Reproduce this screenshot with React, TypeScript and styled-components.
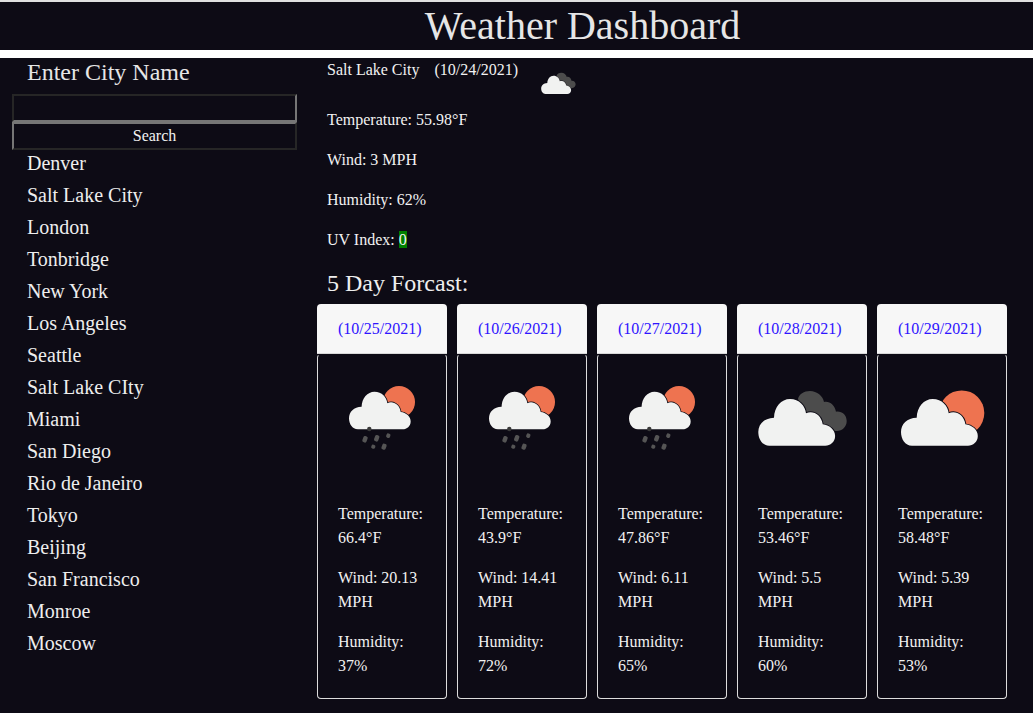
import styled, { createGlobalStyle } from "styled-components";

const GlobalStyle = createGlobalStyle`
  html, body {
    margin: 0;
    padding: 0;
    background-color: #0d0b15;
  }

  body {
    color: #f2f2f2;
    font-family: "Liberation Serif", "Times New Roman", serif;
    font-size: 16px;
    line-height: 24px;
  }
`;

const CITIES = [
  "Denver",
  "Salt Lake City",
  "London",
  "Tonbridge",
  "New York",
  "Los Angeles",
  "Seattle",
  "Salt Lake CIty",
  "Miami",
  "San Diego",
  "Rio de Janeiro",
  "Tokyo",
  "Beijing",
  "San Francisco",
  "Monroe",
  "Moscow",
];

type IconKind = "rain" | "clouds" | "sun";

const FORECAST: {
  date: string;
  temp: string;
  wind: string;
  humidity: string;
  icon: IconKind;
}[] = [
  { date: "(10/25/2021)", temp: "66.4", wind: "20.13", humidity: "37", icon: "rain" },
  { date: "(10/26/2021)", temp: "43.9", wind: "14.41", humidity: "72", icon: "rain" },
  { date: "(10/27/2021)", temp: "47.86", wind: "6.11", humidity: "65", icon: "rain" },
  { date: "(10/28/2021)", temp: "53.46", wind: "5.5", humidity: "60", icon: "clouds" },
  { date: "(10/29/2021)", temp: "58.48", wind: "5.39", humidity: "53", icon: "sun" },
];

const CLOUD_PATH =
  "M11 46.7C4 46.7 0 40 0 33C0 25 6 19 15.7 18.7C16 8 23 0 31.7 0C41 0 47 7 47.7 14.3C54 11 63 15 64.4 25.3C71 26 77 31 76.8 37C76.8 43 72 46.7 67 46.7Z";

const BACK_CLOUD_PATH =
  "M40 25C41 20 46 17 52 17C59 17 65 22 66 28C71 26.5 77 31 78 37.7C84 37 88.7 41 88.7 47C88.7 53 84 57 79 57L55 57Z";

const DROPS = [
  [27, 65.3, 4.4, 6.4],
  [38.7, 64.3, 4.4, 6.4],
  [50.3, 61.7, 4, 4.4],
  [35.3, 72.7, 4, 4],
  [46, 72.7, 4.4, 6],
];

function Cloud({ x, y, scale }: { x: number; y: number; scale: number }) {
  return (
    <path
      d={CLOUD_PATH}
      transform={`translate(${x} ${y}) scale(${scale})`}
      fill="#f1f2f1"
      stroke="#0d0b15"
      strokeWidth={1.8}
      paintOrder="stroke"
    />
  );
}

function WeatherIcon({ kind }: { kind: IconKind }) {
  return (
    <svg viewBox="0 0 110 100" width="100%" height="100%">
      {kind === "rain" && (
        <>
          <circle cx={61} cy={28} r={16} fill="#ee7350" />
          <Cloud x={11} y={17.7} scale={0.803} />
          <circle cx={31.3} cy={55} r={2.2} fill="#3a3a3a" />
          {DROPS.map(([x, y, w, h]) => (
            <rect
              key={`${x}-${y}`}
              x={x - w / 2}
              y={y - h / 2}
              width={w}
              height={h}
              rx={1.6}
              fill="#555555"
              transform={`rotate(20 ${x} ${y})`}
            />
          ))}
        </>
      )}
      {kind === "clouds" && (
        <>
          <path d={BACK_CLOUD_PATH} fill="#4c4c4c" />
          <Cloud x={0.3} y={25} scale={1} />
        </>
      )}
      {kind === "sun" && (
        <>
          <circle cx={63.7} cy={39} r={22.6} fill="#ee7350" />
          <Cloud x={3} y={25} scale={1} />
        </>
      )}
    </svg>
  );
}

export default function App() {
  return (
    <>
      <GlobalStyle />
      <Header>
        <Title>Weather Dashboard</Title>
      </Header>
      <Layout>
        <Sidebar>
          <SearchLabel>Enter City Name</SearchLabel>
          <SearchInput type="text" />
          <SearchButton type="button">Search</SearchButton>
          <CityList>
            {CITIES.map((city) => (
              <City key={city}>{city}</City>
            ))}
          </CityList>
        </Sidebar>
        <Main>
          <CurrentHeading>
            <span>Salt Lake City</span>
            <CurrentDate>(10/24/2021)</CurrentDate>
            <CurrentIcon>
              <WeatherIcon kind="clouds" />
            </CurrentIcon>
          </CurrentHeading>
          <Stat>Temperature: 55.98°F</Stat>
          <Stat>Wind: 3 MPH</Stat>
          <Stat>Humidity: 62%</Stat>
          <Stat>
            UV Index: <UvBadge>0</UvBadge>
          </Stat>
          <ForecastTitle>5 Day Forcast:</ForecastTitle>
          <CardRow>
            {FORECAST.map(({ date, temp, wind, humidity, icon }) => (
              <Card key={date}>
                <CardHeader>{date}</CardHeader>
                <CardBody>
                  <CardIcon>
                    <WeatherIcon kind={icon} />
                  </CardIcon>
                  <CardStat>Temperature: {temp}°F</CardStat>
                  <CardStat>Wind: {wind} MPH</CardStat>
                  <CardStat>Humidity: {humidity}%</CardStat>
                </CardBody>
              </Card>
            ))}
          </CardRow>
        </Main>
      </Layout>
    </>
  );
}

const Header = styled.header`
  display: flex;
  justify-content: center;
  height: 48px;
  padding-left: 132px;
  border-top: 2px solid #e0e0e0;
  border-bottom: 8px solid #ffffff;
`;

const Title = styled.h1`
  margin: 0;
  color: #e6e6e6;
  font-size: 40px;
  font-weight: 400;
  line-height: 48px;
`;

const Layout = styled.div`
  display: grid;
  grid-template-columns: 317px 1fr;
`;

const Sidebar = styled.aside`
  display: flex;
  flex-direction: column;
  padding-left: 12px;
`;

const SearchLabel = styled.h2`
  margin: 0 0 7px 15px;
  color: #e6e6e6;
  font-size: 24px;
  font-weight: 400;
  line-height: 29px;
`;

const SearchInput = styled.input`
  box-sizing: border-box;
  width: 285px;
  height: 28px;
  padding: 0 2px;
  background-color: transparent;
  border-style: solid;
  border-width: 2px;
  border-color: #262626 #767676 #767676 #262626;
`;

const SearchButton = styled.button`
  box-sizing: border-box;
  width: 285px;
  height: 28px;
  padding: 0;
  background-color: transparent;
  color: #f2f2f2;
  font-family: inherit;
  font-size: 16px;
  border-style: solid;
  border-width: 2px;
  border-color: #767676 #262626 #262626 #767676;
`;

const CityList = styled.div`
  display: flex;
  flex-direction: column;
  gap: 6px;
  padding-left: 15px;
`;

const City = styled.div`
  color: #eeeeee;
  font-size: 20px;
  line-height: 26px;
`;

const Main = styled.main`
  display: flex;
  flex-direction: column;
  padding-bottom: 14px;
`;

const CurrentHeading = styled.div`
  display: flex;
  height: 50px;
  padding: 0 10px;
`;

const CurrentDate = styled.span`
  margin-left: 15px;
`;

const CurrentIcon = styled.span`
  width: 43px;
  height: 39px;
  margin: 8px 0 0 23px;
`;

const Stat = styled.p`
  margin: 0 0 16px;
  padding: 0 10px;
`;

const UvBadge = styled.span`
  background-color: #008000;
`;

const ForecastTitle = styled.h3`
  margin: 0 0 6px;
  padding: 0 10px;
  color: #eeeeee;
  font-size: 24px;
  font-weight: 400;
  line-height: 30px;
`;

const CardRow = styled.div`
  display: flex;
  gap: 10px;
`;

const Card = styled.article`
  display: flex;
  flex-direction: column;
  width: 130px;
`;

const CardHeader = styled.div`
  box-sizing: border-box;
  height: 50px;
  padding: 13px 21px;
  background-color: #f7f7f7;
  border-bottom: 1px solid #d8d8d8;
  border-radius: 4px 4px 0 0;
  color: #2f14ff;
`;

const CardBody = styled.div`
  box-sizing: border-box;
  height: 345px;
  padding: 19px 20px 0;
  border: 1px solid #dddddd;
  border-top-color: transparent;
  border-radius: 4px;
`;

const CardIcon = styled.div`
  width: 110px;
  height: 100px;
  margin-bottom: 28px;
`;

const CardStat = styled.p`
  margin: 0 0 16px;
`;
